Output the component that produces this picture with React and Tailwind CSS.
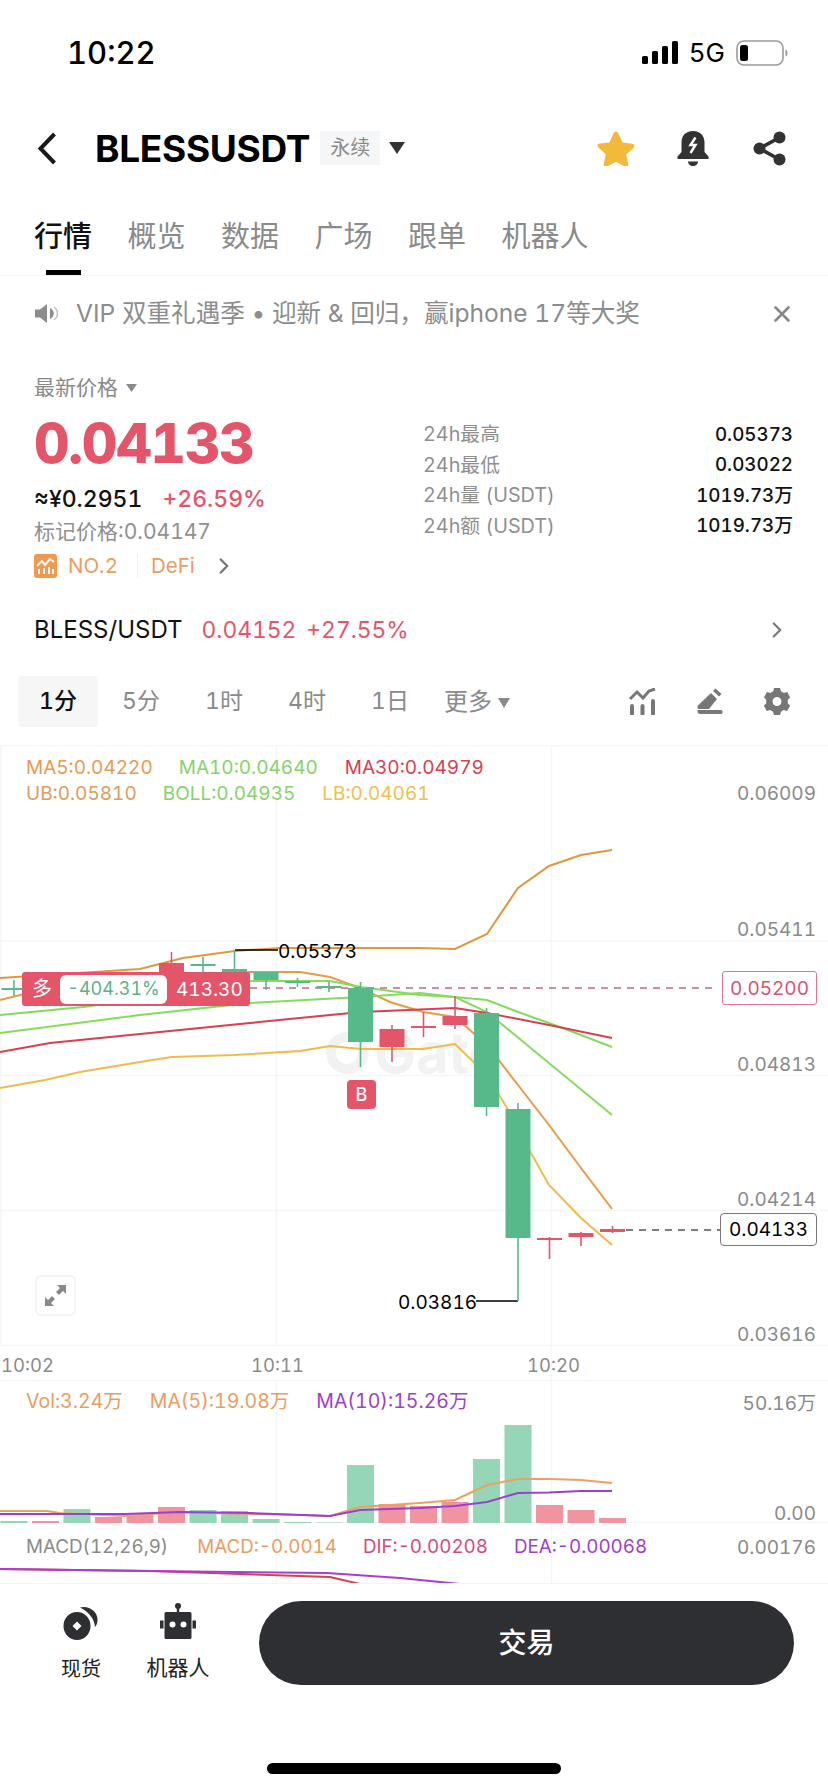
import { X, ChevronRight } from 'lucide-react';

const font = { fontFamily: '"Inter", "Noto Sans CJK SC", sans-serif' };

const RED = '#e5556a';
const GREEN = '#57b98a';

const centerX = i => 14 + 31.5 * i;

const toPoints = pts => pts.map(p => p.join(',')).join(' ');

// [candle index, color, bodyTop, bodyBottom, wickTop, wickBottom]
const candles = [
  [0, 'g', 988, 990, 980, 996],
  [5, 'r', 963, 1000, 952, 1000],
  [6, 'g', 964, 966, 957, 974],
  [7, 'g', 969, 990, 950, 990],
  [8, 'g', 972, 980, 972, 990],
  [9, 'g', 981, 983, 978, 987],
  [10, 'g', 986, 988, 982, 992],
  [11, 'g', 988, 1042, 982, 1067],
  [12, 'r', 1029, 1047, 1025, 1062],
  [13, 'r', 1026, 1028, 1012, 1037],
  [14, 'r', 1016, 1025, 996, 1029],
  [15, 'g', 1013, 1107, 1008, 1116],
  [16, 'g', 1109, 1238, 1103, 1301],
  [17, 'r', 1238, 1240, 1237, 1259],
  [18, 'r', 1233, 1237, 1232, 1246],
  [19, 'r', 1229, 1232, 1226, 1233],
];

const lines = [
  { color: '#e0983f', pts: [[0, 978], [140, 969], [183, 958], [235, 951], [280, 948], [332, 948], [420, 948], [455, 949], [487, 934], [518, 888], [549, 866], [581, 855], [612, 850]] },
  { color: '#ea9a45', pts: [[0, 1000], [40, 990], [250, 972], [300, 972], [330, 977], [360, 988], [390, 1002], [423, 1012], [455, 1017], [487, 1045], [518, 1085], [549, 1125], [581, 1168], [612, 1209]] },
  { color: '#f0bb4a', pts: [[0, 1088], [45, 1080], [80, 1072], [140, 1062], [172, 1057], [235, 1055], [300, 1051], [330, 1046], [361, 1049], [423, 1049], [455, 1044], [487, 1075], [507, 1108], [531, 1153], [549, 1185], [581, 1218], [612, 1245]] },
  { color: '#84dc5c', pts: [[0, 1015], [83, 1007], [170, 995], [252, 981], [330, 981], [361, 987], [420, 995], [455, 997], [487, 1012], [612, 1115]] },
  { color: '#84dc5c', pts: [[0, 1033], [140, 1015], [250, 1003], [361, 997], [420, 993], [455, 997], [487, 1000], [518, 1012], [549, 1023], [581, 1035], [612, 1047]] },
  { color: '#d93f4c', pts: [[0, 1052], [50, 1043], [140, 1034], [250, 1023], [330, 1015], [361, 1012], [455, 1008], [487, 1013], [549, 1025], [612, 1038]] },
];

// [candle index, color, top]
const volumeBars = [
  [0, 'g', 1521], [1, 'r', 1521], [2, 'g', 1509], [3, 'r', 1517], [4, 'r', 1515],
  [5, 'r', 1507], [6, 'g', 1510], [7, 'g', 1511], [8, 'g', 1519], [9, 'g', 1522],
  [10, 'g', 1522.5], [11, 'g', 1465], [12, 'r', 1504], [13, 'r', 1506], [14, 'r', 1502],
  [15, 'g', 1459], [16, 'g', 1425], [17, 'r', 1505], [18, 'r', 1510], [19, 'r', 1518],
];

const volMa5 = [[0, 1511], [47, 1511], [60, 1513], [125, 1516], [180, 1512], [250, 1514], [300, 1515], [330, 1516], [360, 1507], [420, 1503], [455, 1500], [487, 1485], [518, 1479], [549, 1479], [581, 1480], [612, 1483]];
const volMa10 = [[0, 1514], [60, 1514], [125, 1514], [180, 1512], [250, 1513], [330, 1516], [360, 1510], [420, 1508], [455, 1506], [487, 1502], [518, 1493], [549, 1492.5], [581, 1491], [612, 1491]];

const StatusBar = () => (
  <div className="flex h-[105px] items-center pl-[67px] pr-[40px]">
    <span className="text-[31px] font-medium leading-none text-black">10:22</span>
    <div className="ml-auto flex items-center">
      <svg width="37" height="23" viewBox="0 0 37 23" fill="#000">
        <rect x="0" y="15" width="6" height="8" rx="1.5" />
        <rect x="10" y="10" width="6" height="13" rx="1.5" />
        <rect x="20" y="5" width="6" height="18" rx="1.5" />
        <rect x="30" y="0" width="6" height="23" rx="1.5" />
      </svg>
      <span className="ml-[10px] text-[26px] font-normal leading-none text-black">5G</span>
      <svg className="ml-[11px]" width="52" height="26" viewBox="0 0 52 26" fill="none">
        <rect x="1" y="1" width="46" height="24" rx="7" stroke="#9a9a9a" strokeWidth="1.6" />
        <rect x="4" y="5" width="8" height="16" rx="2.5" fill="#000" />
        <path d="M49.5 9.5c1.6.6 2 2 2 3.5s-.4 2.9-2 3.5z" fill="#9a9a9a" />
      </svg>
    </div>
  </div>
);

const NavBar = () => (
  <div className="flex h-[86px] items-center pl-[37px] pr-[42px]">
    <svg width="20" height="33" viewBox="0 0 20 33" fill="none">
      <path d="M17.5 2 L3.5 16.5 L17.5 31" stroke="#1a1a1a" strokeWidth="4" />
    </svg>
    <span className="ml-[38px] text-[37px] font-bold leading-none tracking-[-0.3px] text-black">BLESSUSDT</span>
    <span className="ml-[10px] flex h-[34px] w-[60px] items-center justify-center bg-[#f5f6f7] text-[20px] text-[#8b8b8b]">永续</span>
    <svg className="ml-[9px]" width="16" height="12" viewBox="0 0 16 12" fill="#333">
      <path d="M0 0h16L8 12z" />
    </svg>
    <svg className="ml-auto" width="38" height="36" viewBox="0 0 38 36">
      <path d="M19 1.5c1 0 1.800.7 2.300 1.800l4.200 9.300 9.800 1.200c2.200.3 2.900 2.400 1.300 3.900l-7.300 6.700 2 10c.4 2.100-1.500 3.400-3.300 2.400L19 31.700l-9 4.900c-1.800 1-3.700-.3-3.300-2.400l2-10-7.300-6.700c-1.600-1.500-.9-3.600 1.300-3.900l9.800-1.200 4.200-9.300C17.200 2.200 18 1.500 19 1.500z" fill="#f2b93b" />
    </svg>
    <svg className="ml-[42px]" width="32" height="35" viewBox="0 0 32 35">
      <path d="M16 0c7.500 0 11.500 5 11.500 11.500v9.500l4 4.500V28H.5v-2.500l4-4.500v-9.500C4.500 5 8.500 0 16 0z" fill="#333" />
      <path d="M11 30.500h10c0 2.500-2.200 4.500-5 4.500s-5-2-5-4.500z" fill="#333" />
      <path d="M18.500 6.500l-5 7.500h5l-5 8" fill="none" stroke="#fff" strokeWidth="2.400" />
    </svg>
    <svg className="ml-[44px]" width="33" height="35" viewBox="0 0 33 35">
      <circle cx="26.500" cy="6.500" r="6" fill="#333" />
      <circle cx="6.500" cy="17.500" r="6" fill="#333" />
      <circle cx="26.500" cy="28.500" r="6" fill="#333" />
      <path d="M26.500 6.500 L6.500 17.500 L26.500 28.500" fill="none" stroke="#333" strokeWidth="3.600" />
    </svg>
  </div>
);

const Tabs = () => (
  <div className="flex gap-[35.5px] border-b border-[#f3f3f3] pl-[34px] pt-[16px]">
    {['行情', '概览', '数据', '广场', '跟单', '机器人'].map((t, i) => (
      <div key={t} className="flex flex-col items-center">
        <span className={`text-[29px] leading-[60px] ${i === 0 ? 'font-medium text-[#111]' : 'text-[#8a8a8a]'}`}>{t}</span>
        <div className={`mt-[3px] h-[5px] w-[35px] ${i === 0 ? 'bg-black' : 'bg-transparent'}`} />
      </div>
    ))}
  </div>
);

const Banner = () => (
  <div className="flex h-[75px] items-center pl-[35px] pr-[33px]">
    <svg width="23" height="23" viewBox="0 0 23 23" fill="#8d8d8d">
      <path d="M0 7.500h5L12 2v19l-7-5.500H0z" />
      <path d="M15 6c2.500 1.300 3.800 3.300 3.800 5.500S17.500 15.700 15 17z" />
      <path d="M19 5c2.300 1.700 3.500 4 3.500 6.500S21.300 16.300 19 18" fill="none" stroke="#bdbdbd" strokeWidth="1.400" />
    </svg>
    <span className="ml-[18px] text-[24.600px] leading-none text-[#8c8c8c]">VIP 双重礼遇季 • 迎新 &amp; 回归，赢iphone 17等大奖</span>
    <X className="ml-auto text-[#888]" size={26} strokeWidth={2.4} />
  </div>
);

const stats = [
  ['24h最高', '0.05373'],
  ['24h最低', '0.03022'],
  ['24h量 (USDT)', '1019.73万'],
  ['24h额 (USDT)', '1019.73万'],
];

const PriceInfo = () => (
  <div className="flex h-[244px] pl-[34px] pr-[35px]">
    <div className="w-[389px]">
      <div className="mt-[24px] flex h-[24px] items-center text-[21px] leading-none text-[#8a8a8a]">
        最新价格
        <svg className="ml-[8px] mt-[2px]" width="11" height="8" viewBox="0 0 11 8" fill="#8a8a8a"><path d="M0 0h11L5.500 8z" /></svg>
      </div>
      <div className="mt-[16px] text-[55px] font-extrabold leading-[56px] tracking-[-1.200px] text-[#e5556a]">0.04133</div>
      <div className="mt-[13px] flex h-[30px] items-center text-[23px] leading-none">
        <span className="font-medium text-[#111]">≈¥0.2951</span>
        <span className="ml-[20px] font-medium text-[#e5556a]">+26.59%</span>
      </div>
      <div className="mt-[4px] h-[28px] text-[21px] leading-[28px] text-[#8f8f8f]">标记价格:0.04147</div>
      <div className="mt-[8px] flex h-[24px] items-center text-[20.500px] text-[#ec9c5e]">
        <svg width="23" height="24" viewBox="0 0 23 24">
          <rect width="23" height="24" rx="3" fill="#f09a50" />
          <path d="M3 12l5-5 3 4 5-6 4 3" fill="none" stroke="#fff" strokeWidth="2" />
          <path d="M5 20v-5M10 20v-6M15 20v-7M19 20v-5" fill="none" stroke="#fff" strokeWidth="2" />
        </svg>
        <span className="ml-[11px]">NO.2</span>
        <span className="ml-[19px] h-[24px] w-px bg-[#f0f0f0]" />
        <span className="ml-[13px]">DeFi</span>
        <ChevronRight className="ml-[16px] text-[#777]" size={26} strokeWidth={2.2} />
      </div>
    </div>
    <div className="flex-1 pt-[69px]">
      {stats.map(([k, v]) => (
        <div key={k} className="flex h-[30.5px] items-center justify-between text-[19.800px] leading-none">
          <span className="text-[#8f8f8f]">{k}</span>
          <span className="text-[18.800px] font-medium text-[#111]">{v}</span>
        </div>
      ))}
    </div>
  </div>
);

const SpotRow = () => (
  <div className="flex h-[70px] items-center pl-[34px] pr-[38px] text-[22.800px]">
    <span className="text-[24px] font-normal text-[#111]">BLESS/USDT</span>
    <span className="ml-[19px] text-[#e5556a]">0.04152</span>
    <span className="ml-[10px] text-[#e5556a]">+27.55%</span>
    <ChevronRight className="ml-auto text-[#777]" size={26} strokeWidth={2} />
  </div>
);

const IntervalBar = () => (
  <div className="flex h-[80px] items-start pl-[18px] pr-[38px] pt-[11px]">
    {['1分', '5分', '1时', '4时', '1日'].map((t, i) => (
      <div key={t} className={`mr-[3px] flex h-[51px] w-[80px] items-center justify-center rounded-[4px] text-[23px] ${i === 0 ? 'bg-[#f6f6f6] font-medium text-[#111]' : 'text-[#8a8a8a]'}`}>{t}</div>
    ))}
    <div className="ml-[11px] flex h-[51px] items-center text-[24px] text-[#8a8a8a]">
      更多
      <svg className="ml-[6px] mt-[2px]" width="12" height="10" viewBox="0 0 12 10" fill="#8a8a8a"><path d="M0 0h12L6 10z" /></svg>
    </div>
    <div className="ml-auto flex h-[51px] items-center gap-[41px]">
      <svg width="27" height="27" viewBox="0 0 27 27" fill="none" stroke="#777">
        <path d="M1 11 L8 4 L14 10 L20 3 L26 1" strokeWidth="3" />
        <path d="M3 26v-8M13.500 26v-8M24 26v-13" strokeWidth="4" strokeLinecap="round" />
      </svg>
      <svg width="26" height="27" viewBox="0 0 26 27" fill="#777">
        <path d="M14 5l6 6L12 21H2c-1 0-1.500-.6-1.500-1.500V18z" />
        <path d="M16 3l2.500-2.500 6 5.500L22 8.500z" />
        <path d="M12 22h12c1 0 1.500 1 1.500 2s-.5 2-1.500 2H3c-1.500 0-2.500-1-2.500-2.500V22z" />
      </svg>
      <svg width="26" height="27" viewBox="0 0 26 27">
        <path fillRule="evenodd" fill="#777" d="M10 0h6l1 3.300 2.800 1.600 3.400-.8 3 5.200-2.400 2.500v3.400l2.400 2.500-3 5.200-3.400-.8-2.800 1.600-1 3.300h-6l-1-3.300-2.800-1.600-3.400.8-3-5.200 2.400-2.500v-3.400L0 9.300l3-5.200 3.400.8L9.200 3.300zM13 9a4.500 4.500 0 1 0 0 9 4.500 4.500 0 0 0 0-9z" />
      </svg>
    </div>
  </div>
);

const AxisLabel = ({ top, children }) => (
  <span className="absolute right-[12px] -translate-y-1/2 text-[19px] leading-none text-[#8a8a8a]" style={{ top }}>{children}</span>
);

const Marker = ({ x, y, children }) => (
  <span className="absolute -translate-y-1/2 text-[19px] leading-none text-black" style={{ left: x, top: y }}>{children}</span>
);

const KlinePane = () => (
  <div className="relative h-[635px] overflow-hidden">
    <div className="absolute left-[326px] top-[280px] flex items-center gap-[6px] text-[56px] font-bold leading-none text-[#f2f2f3]">
      <span className="h-[42px] w-[42px] rounded-full border-[10px] border-[#f2f2f3]" />
      Gate
    </div>
    <svg className="absolute inset-0" width="828" height="635" viewBox="0 745 828 635" fill="none">
      <path d="M0 745.500H828M0 941H828M0 1075.500H828M0 1210.500H828M0 1345.500H828M276.500 745V1345M551.500 745V1380M1 745V1345" stroke="#f6f6f6" strokeWidth="1.500" />
      {lines.map((l, i) => (
        <polyline key={i} points={toPoints(l.pts)} stroke={l.color} strokeWidth="2" />
      ))}
      <path d="M235 950H278M476 1301H518" stroke="#000" strokeWidth="1.500" />
      <path d="M250 988H716" stroke="#c5677f" strokeWidth="1.500" strokeDasharray="7 6" />
      <path d="M600 1230H720" stroke="#555" strokeWidth="1.500" strokeDasharray="7 6" />
      {candles.map(([i, c, top, bottom, wickTop, wickBottom]) => {
        const x = centerX(i);
        const color = c === 'g' ? GREEN : RED;
        return (
          <g key={i}>
            <path d={`M${x} ${wickTop}V${wickBottom}`} stroke={color} strokeWidth="1.600" />
            <rect x={x - 12.500} y={top} width="25" height={bottom - top} fill={color} />
          </g>
        );
      })}
    </svg>

    {/* legends */}
    <div className="absolute left-[26px] top-[10px] flex h-[24px] items-center text-[19px] leading-none">
      <span className="text-[#e89a52]">MA5:0.04220</span>
      <span className="ml-[26px] text-[#84d46a]">MA10:0.04640</span>
      <span className="ml-[27px] text-[#d9404f]">MA30:0.04979</span>
    </div>
    <div className="absolute left-[26px] top-[36px] flex h-[24px] items-center text-[19px] leading-none">
      <span className="text-[#e09c5a]">UB:0.05810</span>
      <span className="ml-[26px] text-[#84d46a]">BOLL:0.04935</span>
      <span className="ml-[27px] text-[#efc04f]">LB:0.04061</span>
    </div>

    <AxisLabel top={48}>0.06009</AxisLabel>
    <AxisLabel top={184}>0.05411</AxisLabel>
    <AxisLabel top={319}>0.04813</AxisLabel>
    <AxisLabel top={454}>0.04214</AxisLabel>
    <AxisLabel top={589}>0.03616</AxisLabel>

    <Marker x={278} y={206}>0.05373</Marker>
    <Marker x={398} y={557}>0.03816</Marker>

    {/* open position tag */}
    <div className="absolute left-[22px] top-[227px] flex h-[34px] w-[228px] items-center rounded-[3px] bg-[#e5556a] text-white">
      <span className="ml-[10px] text-[20px] leading-none">多</span>
      <span className="ml-[8px] flex h-[29px] w-[107px] items-center justify-center rounded-[6px] bg-white text-[18px] leading-none text-[#5cb08a]">-404.31%</span>
      <span className="ml-[9px] text-[19px] leading-none">413.30</span>
    </div>
    <div className="absolute left-[722px] top-[226px] flex h-[34px] w-[95px] items-center justify-center rounded-[3px] border border-[#e0778a] bg-white text-[19px] leading-none text-[#d9546f]">0.05200</div>
    <div className="absolute left-[720px] top-[468px] flex h-[33px] w-[97px] items-center justify-center rounded-[4px] border border-[#777] bg-white text-[19px] leading-none text-black">0.04133</div>

    {/* buy marker */}
    <div className="absolute left-[347px] top-[335px] flex h-[29px] w-[29px] items-center justify-center rounded-[4px] bg-[#e5556a] text-[18px] font-medium leading-none text-white">B</div>

    {/* expand */}
    <div className="absolute left-[35px] top-[530px] flex h-[41px] w-[41px] items-center justify-center rounded-[6px] border-2 border-[#f4f4f4] bg-white">
      <svg width="21" height="21" viewBox="0 0 21 21" fill="#8a8a8a">
        <path d="M12 0h9v9l-3-3-4 4-3-3 4-4zM0 21v-9l3 3 4-4 3 3-4 4 3 3z" />
      </svg>
    </div>

    {/* time axis */}
    {[['10:02', 1], ['10:11', 251], ['10:20', 527]].map(([t, x]) => (
      <span key={t} className="absolute top-[611px] text-[18.500px] leading-[18px] text-[#8a8a8a]" style={{ left: x }}>{t}</span>
    ))}
  </div>
);

const VolumePane = () => (
  <div className="relative h-[143px] overflow-hidden">
    <svg className="absolute inset-0" width="828" height="143" viewBox="0 1380 828 143" fill="none">
      <path d="M0 1380.500H828M0 1522.500H828M276.500 1380V1523M551.500 1380V1523" stroke="#f6f6f6" strokeWidth="1.500" />
      {volumeBars.map(([i, c, top]) => (
        <rect key={i} x={centerX(i) - 13.500} y={top} width="27" height={1523 - top} fill={c === 'g' ? '#94d6b6' : '#f0959f'} />
      ))}
      <polyline points={toPoints(volMa5)} stroke="#eda15e" strokeWidth="2" />
      <polyline points={toPoints(volMa10)} stroke="#9b3fd0" strokeWidth="2" />
    </svg>
    <div className="absolute left-[26px] top-[10px] flex h-[24px] items-center text-[19.500px] leading-none">
      <span className="text-[#eb9c5f]">Vol:3.24万</span>
      <span className="ml-[27px] text-[#eb9c5f]">MA(5):19.08万</span>
      <span className="ml-[27px] text-[#9b3fd0]">MA(10):15.26万</span>
    </div>
    <AxisLabel top={23}>50.16万</AxisLabel>
    <AxisLabel top={133}>0.00</AxisLabel>
  </div>
);

const MacdPane = () => (
  <div className="relative h-[61px] overflow-hidden border-b border-[#f4f4f4]">
    <svg className="absolute inset-0" width="828" height="61" viewBox="0 1523 828 61" fill="none">
      <path d="M276.500 1523V1584M551.500 1523V1584" stroke="#f6f6f6" strokeWidth="1.500" />
      <polyline points="0,1569 150,1571 330,1577 360,1584" stroke="#d9404f" strokeWidth="2" />
      <polyline points="0,1569 150,1571 327,1573 400,1578 460,1584" stroke="#a63fd0" strokeWidth="2" />
    </svg>
    <div className="absolute left-[26px] top-[12px] flex h-[24px] items-center text-[18.800px] leading-none">
      <span className="text-[#8a8a8a]">MACD(12,26,9)</span>
      <span className="ml-[29px] text-[#eb9c5f]">MACD:-0.0014</span>
      <span className="ml-[26px] text-[#cf4b7e]">DIF:-0.00208</span>
      <span className="ml-[26px] text-[#9b3fd0]">DEA:-0.00068</span>
    </div>
    <AxisLabel top={24}>0.00176</AxisLabel>
  </div>
);

const Footer = () => (
  <div className="pt-[17px]">
    <div className="flex items-start pl-[41px]">
      <div className="flex w-[80px] flex-col items-center">
        <svg className="mt-[5px]" width="36" height="34" viewBox="0 0 36 34">
          <path fillRule="evenodd" fill="#2e2f33" d="M14 6a13.500 14 0 1 1 0 28 13.500 14 0 0 1 0-28zM14 15.500l-4.500 4.500 4.500 4.500 4.500-4.500z" />
          <path d="M17 1.500C26 -1 35 6 34.500 14c0 3-1 5.500-2.500 7C31.500 13 26 6 17 1.500z" fill="#2e2f33" />
        </svg>
        <span className="mt-[17px] text-[20px] leading-[24px] text-[#222]">现货</span>
      </div>
      <div className="ml-[17px] flex w-[80px] flex-col items-center">
        <svg className="mt-[2px]" width="36" height="36" viewBox="0 0 36 36" fill="#2e2f33">
          <circle cx="18" cy="3" r="3" />
          <path d="M16.800 5h2.400v4h-2.400z" />
          <path fillRule="evenodd" d="M6 9h24a1.500 1.500 0 0 1 1.500 1.500v24a1.500 1.500 0 0 1-1.500 1.500H6a1.500 1.500 0 0 1-1.500-1.500v-24A1.500 1.500 0 0 1 6 9zM12.500 18.500a3 3 0 1 0 0 6 3 3 0 0 0 0-6zM23.500 18.500a3 3 0 1 0 0 6 3 3 0 0 0 0-6z" />
          <path d="M0 17.500h3.500v8H0zM32.500 17.500H36v8h-3.500z" />
        </svg>
        <span className="mt-[17px] text-[21px] leading-[24px] text-[#222]">机器人</span>
      </div>
      <div className="ml-[41px] flex h-[84px] w-[535px] items-center justify-center rounded-full bg-[#2e2f33] text-[28px] font-medium text-white">交易</div>
    </div>
    <div className="mx-auto mt-[78px] h-[11px] w-[294px] rounded-full bg-black" />
  </div>
);

const App = () => (
  <div className="h-[1792px] w-[828px] overflow-hidden bg-white tabular-nums" style={font}>
    <StatusBar />
    <NavBar />
    <Tabs />
    <Banner />
    <PriceInfo />
    <SpotRow />
    <IntervalBar />
    <KlinePane />
    <VolumePane />
    <MacdPane />
    <Footer />
  </div>
);

export default App;
